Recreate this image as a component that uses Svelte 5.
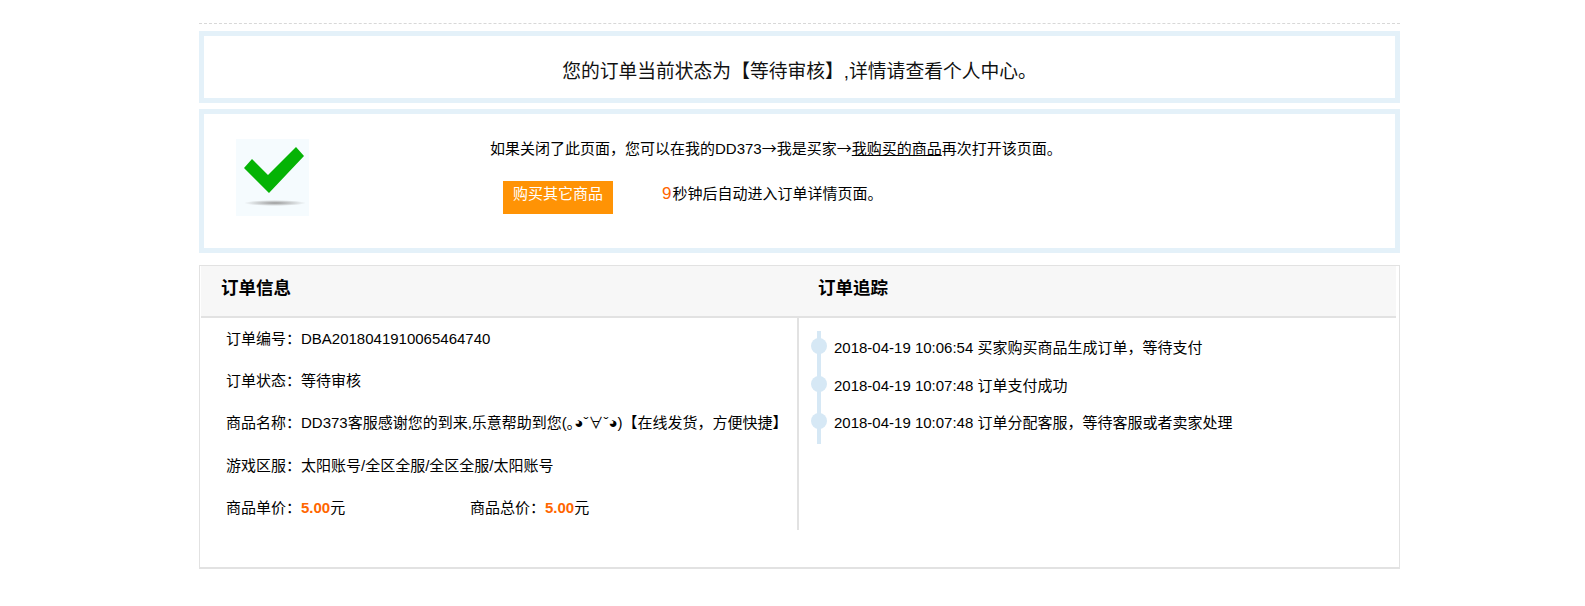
<script>
  const orderRows = [
    { label: '订单编号：', value: 'DBA2018041910065464740' },
    { label: '订单状态：', value: '等待审核' },
    { label: '商品名称：', value: 'DD373客服感谢您的到来,乐意帮助到您(｡◕ˇ∀ˇ◕)【在线发货，方便快捷】' },
    { label: '游戏区服：', value: '太阳账号/全区全服/全区全服/太阳账号' }
  ];
  const tracking = [
    { time: '2018-04-19 10:06:54', text: '买家购买商品生成订单，等待支付' },
    { time: '2018-04-19 10:07:48', text: '订单支付成功' },
    { time: '2018-04-19 10:07:48', text: '订单分配客服，等待客服或者卖家处理' }
  ];
</script>

<div class="page">
  <div class="rule"></div>

  <div class="box status">您的订单当前状态为【等待审核】,详情请查看个人中心。</div>

  <div class="box notice">
    <svg class="tick" width="73" height="77" viewBox="0 0 73 77" aria-hidden="true">
      <defs>
        <radialGradient id="shade">
          <stop offset="0" stop-color="#9a9a9a" />
          <stop offset="1" stop-color="#f5fbfe" />
        </radialGradient>
      </defs>
      <rect width="73" height="77" fill="#f5fbfe" />
      <ellipse cx="39" cy="64" rx="31" ry="3" fill="url(#shade)" />
      <polygon points="8,29 16,20 32,36 60,8 68,17 33,54" fill="#05b305" />
    </svg>
    <div class="notice-body">
      <p class="hint">如果关闭了此页面，您可以在我的DD373<span class="arrow">→</span>我是买家<span class="arrow">→</span><u>我购买的商品</u>再次打开该页面。</p>
      <div class="actions">
        <span class="buy">购买其它商品</span>
        <span class="count"><em>9</em>秒钟后自动进入订单详情页面。</span>
      </div>
    </div>
  </div>

  <div class="panel">
    <div class="head">
      <h3 class="h-left">订单信息</h3>
      <h3 class="h-right">订单追踪</h3>
    </div>
    <div class="cols">
      <div class="info">
        {#each orderRows as row}
          <div class="row"><span class="label">{row.label}</span><span class="val">{row.value}</span></div>
        {/each}
        <div class="row prices">
          <div class="price"><span class="label">商品单价：</span><b>5.00</b>元</div>
          <div class="price"><span class="label">商品总价：</span><b>5.00</b>元</div>
        </div>
      </div>
      <div class="track">
        <div class="rail"></div>
        {#each tracking as t}
          <div class="step"><span class="dot"></span>{t.time} {t.text}</div>
        {/each}
      </div>
    </div>
  </div>
</div>

<style>
  :global(body) {
    margin: 0;
    background: #fff;
  }
  .page {
    width: 1201px;
    margin-left: 199px;
    padding-top: 23px;
    font: 15px/20px "Liberation Sans", "Noto Sans CJK SC", sans-serif;
    color: #000;
  }
  .rule {
    border-top: 1px dashed #d8d8d8;
    margin-bottom: 7px;
  }
  .box {
    border: 5px solid #e4f1f9;
    box-sizing: border-box;
  }
  .status {
    height: 72px;
    margin-bottom: 6px;
    text-align: center;
    font-size: 18.8px;
    line-height: 72px;
    color: #111;
  }
  .notice {
    height: 144px;
    display: flex;
    align-items: flex-start;
    padding: 25px 0 0 32px;
  }
  .tick {
    flex: none;
    display: block;
  }
  .notice-body {
    margin-left: 181px;
  }
  .hint {
    margin: -1px 0 0;
    height: 20px;
  }
  .arrow {
    font-family: "Noto Sans CJK SC", sans-serif;
  }
  .actions {
    display: flex;
    align-items: flex-start;
    margin: 23px 0 0 13px;
  }
  .buy {
    width: 110px;
    height: 33px;
    background: #ff9305;
    color: #fff;
    text-align: center;
    line-height: 26px;
  }
  .count {
    margin-left: 49px;
    line-height: 26px;
  }
  .count em {
    font-style: normal;
    font-size: 17px;
    line-height: 20px;
    color: #ff6600;
    margin-right: 1px;
  }
  .panel {
    margin-top: 12px;
    height: 304px;
    box-sizing: border-box;
    border: 1px solid #e2e2e2;
    border-bottom-width: 2px;
    padding-right: 3px;
  }
  .head {
    display: flex;
    height: 52px;
    box-sizing: border-box;
    background: #f7f7f7;
    border-bottom: 2px solid #e2e2e2;
    margin-left: 1px;
  }
  h3 {
    margin: 0;
    font-size: 17.5px;
    line-height: 44px;
    font-weight: bold;
  }
  .h-left {
    width: 597px;
    padding-left: 20px;
    box-sizing: border-box;
  }
  .h-right {
    padding-left: 20px;
  }
  .cols {
    display: flex;
    height: 212px;
    margin-left: 1px;
  }
  .info {
    width: 598px;
    box-sizing: border-box;
    border-right: 2px solid #e2e2e2;
    padding: 0 0 0 25px;
  }
  .row {
    height: 42.2px;
    line-height: 41px;
    white-space: nowrap;
    display: flex;
  }
  .label {
    display: inline-block;
    width: 75px;
  }
  .prices {
    display: flex;
  }
  .price {
    width: 244px;
  }
  .price b {
    color: #ff6600;
  }
  .track {
    position: relative;
    padding: 10.9px 0 0 35px;
    flex: 1;
  }
  .rail {
    position: absolute;
    left: 18px;
    top: 13px;
    width: 4px;
    height: 113px;
    background: #d6e8f5;
  }
  .step {
    position: relative;
    height: 37.7px;
    line-height: 37px;
    white-space: nowrap;
  }
  .dot {
    position: absolute;
    left: -23px;
    top: 9px;
    width: 16px;
    height: 16px;
    border-radius: 50%;
    background: #d6e8f5;
  }
</style>
